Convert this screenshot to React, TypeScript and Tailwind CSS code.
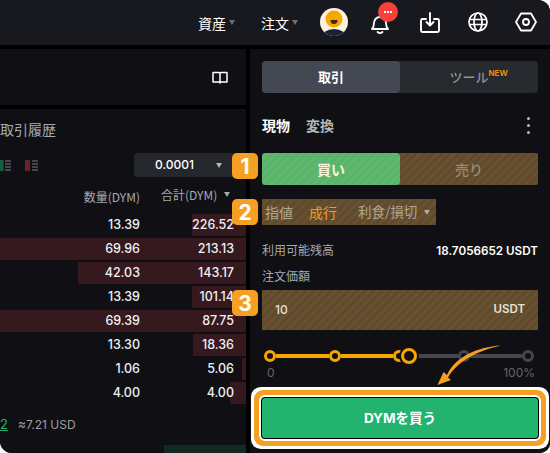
import React from "react";

const rows = [
  { q: "13.39", t: "226.52", left: 192 },
  { q: "69.96", t: "213.13", left: 0 },
  { q: "42.03", t: "143.17", left: 78 },
  { q: "13.39", t: "101.14", left: 192 },
  { q: "69.39", t: "87.75", left: 0 },
  { q: "13.30", t: "18.36", left: 193 },
  { q: "1.06", t: "5.06", left: 242 },
  { q: "4.00", t: "4.00", left: 230 },
];

const Caret = ({ className }: { className: string }) => (
  <span className={"inline-block w-0 h-0 border-l-[3.5px] border-r-[3.5px] border-t-[5px] border-l-transparent border-r-transparent " + className} />
);

const Badge = ({ n, top }: { n: number; top: string }) => (
  <div className={"absolute left-[232px] w-[26px] h-[26px] rounded-[5px] bg-[#f59f23] flex items-center justify-center text-white text-[21px] font-bold leading-none " + top}>
    {n}
  </div>
);

const Node = ({ on }: { on: boolean }) => (
  <span className={on ? "w-[12px] h-[12px] rounded-full border-[3px] border-[#f7a600] bg-[#101014] shrink-0" : "w-[12px] h-[12px] rounded-full border-[3px] border-[#44474c] bg-[#101014] shrink-0"} />
);

export default function App() {
  return (
    <div className="w-[550px] h-[453px] bg-white overflow-hidden font-['Inter','Noto_Sans_CJK_JP',sans-serif]">
      <div className="relative w-full h-full bg-black rounded-tr-[12px] rounded-bl-[12px] rounded-br-[10px] overflow-hidden flex flex-col">
        {/* Header */}
        <header className="h-[45px] shrink-0 bg-[#17191f] flex items-center justify-end text-white text-[14px] font-['Noto_Sans_CJK_JP',sans-serif]">
          <span className="mr-[3px] leading-none">資産</span>
          <Caret className="border-t-[#6d6f74] mr-[26px]" />
          <span className="mr-[3px] leading-none">注文</span>
          <Caret className="border-t-[#6d6f74] mr-[22px]" />
          <svg width="28" height="28" viewBox="0 0 28 28" className="mr-[21px] mt-[-2px]">
            <defs>
              <clipPath id="av"><circle cx="14" cy="14" r="14" /></clipPath>
            </defs>
            <g clipPath="url(#av)">
              <rect width="28" height="28" fill="#fdf3e0" />
              <ellipse cx="14" cy="30" rx="13" ry="9" fill="#1b2238" />
              <circle cx="14" cy="11" r="8.5" fill="#f7a600" />
              <path d="M10.500 12h7c0 3-1.500 4-3.500 4s-3.500-1-3.500-4z" fill="#3a2a10" />
            </g>
          </svg>
          <div className="relative w-[24px] h-[24px] mr-[27px]">
            <svg width="20" height="22" viewBox="0 0 20 22" fill="none" stroke="#fff" strokeWidth="1.800" strokeLinejoin="round" strokeLinecap="round" className="absolute left-[1px] top-[2px]">
              <path d="M2 16c1.500-1.500 2-3 2-6a6 6 0 0 1 12 0c0 3 .5 4.500 2 6z" />
              <path d="M7.500 19c1.500 1.300 3.500 1.300 5 0" />
            </svg>
            <div className="absolute left-[9px] top-[-9px] w-[20px] h-[20px] rounded-full bg-[#f6423a] flex items-center justify-center gap-[1px]">
              <span className="w-[2px] h-[2px] bg-white" />
              <span className="w-[2px] h-[2px] bg-white" />
              <span className="w-[2px] h-[2px] bg-white" />
            </div>
          </div>
          <svg width="20" height="22" viewBox="0 0 20 22" fill="none" stroke="#fff" strokeWidth="1.900" strokeLinecap="round" strokeLinejoin="round" className="mr-[28px] mt-[1px]">
            <path d="M6 7H2.500A1.500 1.500 0 0 0 1 8.500v10A1.500 1.500 0 0 0 2.500 20h15a1.500 1.500 0 0 0 1.500-1.500v-10A1.500 1.500 0 0 0 17.500 7H14" />
            <path d="M10 1v12M6.500 10l3.500 3.500 3.500-3.500" />
          </svg>
          <svg width="20" height="20" viewBox="0 0 20 20" fill="none" stroke="#fff" strokeWidth="1.700" className="mr-[27px] mt-[-2px]">
            <circle cx="10" cy="10" r="9" />
            <ellipse cx="10" cy="10" rx="4" ry="9" />
            <path d="M1 7.500h18M1 12.500h18" />
          </svg>
          <svg width="22" height="20" viewBox="0 0 22 20" fill="none" stroke="#fff" strokeWidth="1.800" strokeLinejoin="round" className="mr-[13px] mt-[-2px]">
            <path d="M1 10 6 1.500h10L21 10l-5 8.500H6z" />
            <circle cx="11" cy="10" r="3" />
          </svg>
        </header>

        <div className="flex-1 flex gap-[4px] pt-[4px] min-h-0">
          {/* Left column */}
          <div className="w-[246px] shrink-0 flex flex-col gap-[4px]">
            <div className="h-[56px] bg-[#101014] flex items-center justify-end pr-[18px] pt-[2px]">
              <svg width="16" height="14" viewBox="0 0 16 14" fill="none" stroke="#fff" strokeWidth="1.500" strokeLinejoin="round">
                <path d="M1 1.500h6c.6 0 1 .4 1 1v9.500c0-.6-.4-1-1-1H1zM15 1.500H9c-.6 0-1 .4-1 1v9.500c0-.6.4-1 1-1h6z" />
              </svg>
            </div>
            <div className="relative flex-1 bg-[#101014] flex flex-col">
              <div className="h-[42px] pt-[10px] text-[14px] leading-[20px] text-[#a5a9b0] font-['Noto_Sans_CJK_JP',sans-serif] whitespace-nowrap">
                取引履歴
              </div>
              <div className="h-[24px] mt-[2px] flex items-center">
                <svg width="40" height="13" viewBox="0 0 40 13" className="shrink-0">
                  <rect x="0" y="1" width="3.500" height="11" fill="#165c3f" />
                  <path d="M5 2h6M5 5h6M5 8h6M5 11h6" stroke="#55585d" strokeWidth="1.500" />
                  <rect x="25" y="1" width="5" height="11" fill="#6b2126" />
                  <path d="M32 2h6M32 5h6M32 8h6M32 11h6" stroke="#55585d" strokeWidth="1.500" />
                </svg>
                <div className="ml-[94px] w-[106px] h-[24px] rounded-[4px] bg-[#24272c] flex items-center pl-[21px] text-[12px] text-white font-medium">
                  <span>0.0001</span>
                  <Caret className="border-t-[#b3b5b9] ml-[22px]" />
                </div>
              </div>
              <div className="h-[32px] pt-[10px] flex items-start text-[12px] leading-[16px] text-[#a5a9b0] font-['Noto_Sans_CJK_JP',sans-serif]">
                <span className="ml-[83px] w-[57px] text-right whitespace-nowrap mt-[2px]">数量(DYM)</span>
                <span className="ml-[21px] whitespace-nowrap">合計(DYM)</span>
                <Caret className="border-t-[#a5a9b0] ml-[7px] mt-[5px]" />
              </div>
              <div className="flex flex-col gap-[2px] mt-[5px]">
                {rows.map((r, i) => (
                  <div key={i} className="relative h-[22px] flex items-center justify-end text-[12.5px] font-medium text-[#eef0f3] leading-none">
                    <div className="absolute right-0 top-0 bottom-0 bg-[#35191e]" style={{ left: r.left }} />
                    <span className="relative w-[60px] text-right">{r.q}</span>
                    <span className="relative w-[94px] mr-[12px] text-right">{r.t}</span>
                  </div>
                ))}
              </div>
              <div className="mt-[10px] h-[22px] flex items-center text-[12px] text-[#8c9099]">
                <span className="text-[13px] text-[#22b36e] underline w-[18px]">2</span>
                <span className="text-[#9a9ea6]">≈7.21 USD</span>
              </div>
              <div className="absolute right-0 bottom-0 w-[82px] h-[8px] bg-[#132a22]" />
            </div>
          </div>

          {/* Right column */}
          <div className="relative flex-1 bg-[#101014] px-[12px] flex flex-col">
            <div className="mt-[12px] h-[32px] shrink-0 flex rounded-[4px] bg-[#26292e] text-[13px] font-['Noto_Sans_CJK_JP',sans-serif]">
              <div className="w-[138px] rounded-[4px] bg-[#434852] flex items-center justify-center text-white font-bold">取引</div>
              <div className="flex-1 flex items-center justify-center text-[#8f939b] font-medium">
                <span className="relative">
                  ツール
                  <span className="absolute left-full top-[2px] text-[8px] font-bold text-[#e8900c] leading-none font-['Inter',sans-serif]">NEW</span>
                </span>
              </div>
            </div>
            <div className="mt-[20px] h-[24px] shrink-0 flex items-center text-[14px] font-bold font-['Noto_Sans_CJK_JP',sans-serif] leading-none">
              <span className="text-white">現物</span>
              <span className="ml-[16px] text-[#b5b8be]">変換</span>
              <span className="ml-auto mr-[8px] flex flex-col gap-[4px]">
                <span className="w-[3px] h-[3px] rounded-full bg-[#b5b8be]" />
                <span className="w-[3px] h-[3px] rounded-full bg-[#b5b8be]" />
                <span className="w-[3px] h-[3px] rounded-full bg-[#b5b8be]" />
              </span>
            </div>
            <div className="mt-[16px] h-[32px] shrink-0 flex bg-[repeating-linear-gradient(135deg,#5f4a2d_0px,#5f4a2d_3px,#675130_3px,#675130_6px)] rounded-[2px] text-[14px] font-['Noto_Sans_CJK_JP',sans-serif] font-bold">
              <div className="w-[138px] rounded-[4px] flex items-center justify-center text-[#f8f3d8] bg-[repeating-linear-gradient(135deg,#5ab46b_0px,#5ab46b_3px,#60b76e_3px,#60b76e_6px)]">買い</div>
              <div className="flex-1 flex items-center justify-center text-[#9b8a6d] font-medium">売り</div>
            </div>
            <div className="mt-[14px] h-[26px] w-[174px] shrink-0 flex items-center text-[14px] leading-none font-['Noto_Sans_CJK_JP',sans-serif] text-[#b2a88f] bg-[repeating-linear-gradient(135deg,#5f4a2d_0px,#5f4a2d_3px,#675130_3px,#675130_6px)]">
              <span className="ml-[3px]">指値</span>
              <span className="ml-[16px] text-[#f59a1e]">成行</span>
              <span className="ml-[21px] text-[13.5px]">利食/損切</span>
              <Caret className="border-t-[#b2a88f] ml-[7px]" />
            </div>
            <div className="mt-[15px] h-[20px] shrink-0 flex items-center justify-between text-[12px]">
              <span className="text-[#a5a9b0] font-['Noto_Sans_CJK_JP',sans-serif]">利用可能残高</span>
              <span className="text-white font-semibold text-[11.7px] mt-[3px]">18.7056652 USDT</span>
            </div>
            <div className="mt-[7px] h-[18px] shrink-0 flex items-center text-[12px] text-[#a5a9b0] font-['Noto_Sans_CJK_JP',sans-serif]">注文価額</div>
            <div className="mt-[5px] h-[40px] shrink-0 flex items-center justify-between px-[13px] text-[12px] text-[#e8e2d0] font-medium bg-[repeating-linear-gradient(135deg,#5f4a2d_0px,#5f4a2d_3px,#675130_3px,#675130_6px)]">
              <span>10</span>
              <span className="font-semibold text-[11.5px]">USDT</span>
            </div>
            <div className="relative mt-[20px] h-[12px] shrink-0 ml-[2px] w-[270px] flex items-center">
              <Node on />
              <span className="w-[53px] h-[4px] bg-[#f7a600]" />
              <Node on />
              <span className="w-[53px] h-[4px] bg-[#f7a600]" />
              <Node on />
              <span className="w-[6px] h-[4px] bg-transparent" />
              <span className="w-[47px] h-[4px] bg-[#44474c]" />
              <Node on={false} />
              <span className="w-[53px] h-[4px] bg-[#44474c]" />
              <Node on={false} />
              <span className="absolute left-[137px] top-[-2px] w-[16px] h-[16px] rounded-full border-[3px] border-[#f7a600] bg-[#101014] shadow-[0_0_0_2px_#101014]" />
            </div>
            <div className="mt-[3px] flex justify-between pl-[5px] pr-[3px] text-[12px] leading-[16px] text-[#61656c]">
              <span>0</span>
              <span>100%</span>
            </div>
            <button className="mt-[17px] h-[40px] shrink-0 rounded-[3px] bg-[#22b36e] text-white text-[13.5px] font-bold font-['Inter','Noto_Sans_CJK_JP',sans-serif] shadow-[0_0_0_1px_#000,0_0_0_3px_#fff,0_0_0_8px_#f59f23,0_0_0_11px_#fff]">
              DYMを買う
            </button>
            <svg width="70" height="44" viewBox="0 0 70 44" className="absolute left-[182px] top-[295px]">
              <path d="M69 1.500C46 3 24 12 15 31l-3.500-3L5.500 41 19 36l-3-2.500C26 16 48 6 69 1.500z" fill="#f59f23" />
            </svg>
          </div>
        </div>

        {/* Numbered annotations */}
        <Badge n={1} top="top-[153px]" />
        <Badge n={2} top="top-[199px]" />
        <Badge n={3} top="top-[290px]" />
      </div>
    </div>
  );
}
